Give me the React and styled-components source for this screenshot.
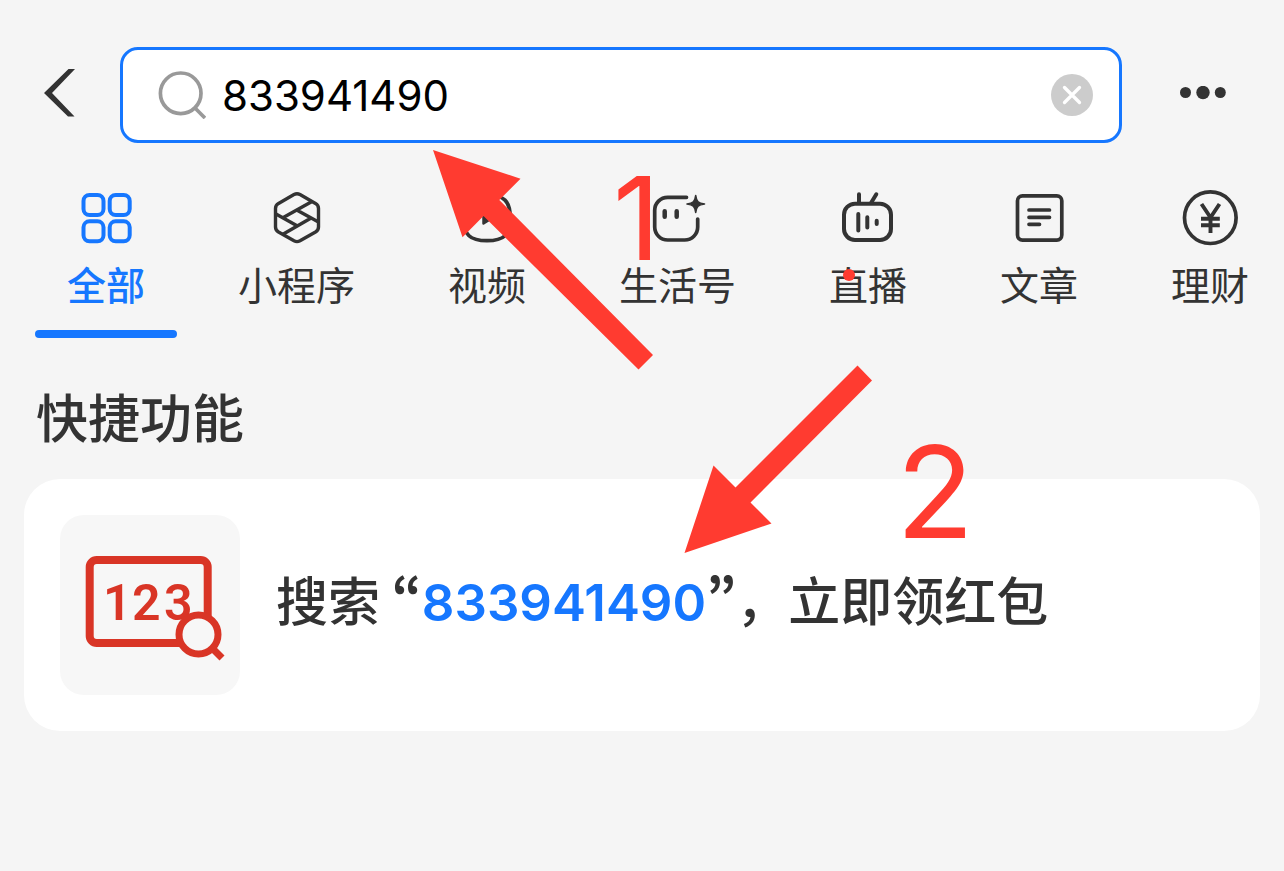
import React from "react";
import styled, { createGlobalStyle } from "styled-components";

const BLUE = "#1677ff";
const INK = "#333333";
const MARK = "#ff3b30";

const GlobalStyle = createGlobalStyle`
  *, *::before, *::after { box-sizing: border-box; }
  body {
    margin: 0;
    background: #f5f5f5;
    color: ${INK};
    font-family: Inter, "Noto Sans CJK SC", sans-serif;
  }
  button { border: 0; padding: 0; background: none; color: inherit; font: inherit; cursor: pointer; }
`;

const Page = styled.div`
  position: relative;
  min-height: 100vh;
  padding-top: 47px;
  overflow-x: hidden;
`;

const Header = styled.header`
  display: grid;
  grid-template-columns: 120px 1fr 162px;
  align-items: start;
`;

const HeaderButton = styled.button`
  display: flex;
  align-items: center;
  justify-content: center;
  height: 92px;
`;

const SearchField = styled.label`
  display: flex;
  align-items: center;
  gap: 16px;
  height: 96px;
  padding: 0 26px 0 35px;
  border: 3px solid ${BLUE};
  border-radius: 18px;
  background: #fff;
`;

const SearchInput = styled.input`
  flex: 1;
  min-width: 0;
  height: 60px;
  padding: 0;
  border: 0;
  outline: 0;
  background: transparent;
  color: #000;
  font-family: inherit;
  font-size: 42px;
`;

const ClearButton = styled.button`
  display: flex;
  align-items: center;
  justify-content: center;
  width: 42px;
  height: 42px;
  border-radius: 50%;
  background: #cccccc;
`;

const Tabs = styled.nav`
  display: flex;
  gap: 29px;
  margin-top: 45px;
  padding-left: 35px;
  overflow: hidden;
`;

const TabItem = styled.div`
  display: flex;
  flex: none;
  flex-direction: column;
`;

const Tab = styled.button`
  display: flex;
  flex-direction: column;
  align-items: center;
  gap: 10px;
  padding: 0 32px 16px;
  color: ${(p) => (p.$active ? BLUE : INK)};
`;

const TabLabel = styled.span`
  font-size: 39px;
  line-height: 56px;
  font-weight: ${(p) => (p.$active ? 500 : 400)};
  white-space: nowrap;
`;

const Indicator = styled.span`
  height: 8px;
  border-radius: 4px;
  background: ${(p) => (p.$active ? BLUE : "transparent")};
`;

const Section = styled.section`
  padding: 44px 24px 0;
`;

const SectionTitle = styled.h2`
  margin: 0 0 21px;
  padding-left: 12px;
  font-size: 52px;
  line-height: 76px;
  font-weight: 500;
`;

const Card = styled.a`
  display: flex;
  align-items: center;
  gap: 36px;
  padding: 36px;
  border-radius: 36px;
  background: #fff;
  color: inherit;
  text-decoration: none;
`;

const Thumb = styled.span`
  flex: none;
  width: 180px;
  height: 180px;
  border-radius: 24px;
  background: #f7f7f7;
`;

const CardText = styled.span`
  padding-bottom: 8px;
  font-size: 52px;
  line-height: 76px;
  font-weight: 500;
`;

const Quote = styled.span`
  font-family: "Noto Sans CJK SC", sans-serif;
  font-feature-settings: "pwid";
  font-weight: 700;
`;

const Keyword = styled.span`
  color: ${BLUE};
  font-size: 51px;
  font-weight: 600;
`;

const Arrow = styled.svg`
  position: absolute;
  left: ${(p) => p.$x}px;
  top: ${(p) => p.$y}px;
  fill: ${MARK};
  pointer-events: none;
`;

const StepNumber = styled.span`
  position: absolute;
  left: ${(p) => p.$x}px;
  top: ${(p) => p.$y}px;
  color: ${MARK};
  font-size: ${(p) => p.$size}px;
  line-height: ${(p) => p.$height}px;
  font-weight: 400;
  pointer-events: none;
`;

const Dot = styled.span`
  position: absolute;
  left: 843px;
  top: 269px;
  width: 12px;
  height: 12px;
  border-radius: 50%;
  background: ${MARK};
`;

const TabIcon = ({ children, width = 4, cap = "round" }) => (
  <svg width="60" height="60" viewBox="0 0 60 60" fill="none" stroke="currentColor"
    strokeWidth={width} strokeLinecap={cap} strokeLinejoin="round" aria-hidden="true">
    {children}
  </svg>
);

const tabs = [
  {
    label: "全部",
    icon: (
      <TabIcon>
        <rect x="7.5" y="7" width="20" height="20" rx="6" />
        <rect x="33.7" y="7" width="20" height="20" rx="6" />
        <rect x="7.5" y="33.3" width="20" height="20" rx="6" />
        <rect x="33.7" y="33.3" width="20" height="20" rx="6" />
      </TabIcon>
    ),
  },
  {
    label: "小程序",
    icon: (
      <TabIcon width={3.4} cap="butt">
        <path d="M27 6.6Q30 5 33 6.6L48.5 15.4Q51.5 17.2 51.5 20.5V39Q51.5 42.2 48.5 44L33 52.8Q30 54.4 27 52.8L11.5 44Q8.5 42.2 8.5 39V20.5Q8.5 17.2 11.5 15.4Z" />
        <path d="M45 13.5L16.3 29.5M9 26L30 37.8M15.5 46.5L43.7 30.3M51 33.7L29.7 22" />
      </TabIcon>
    ),
  },
  {
    label: "视频",
    icon: (
      <TabIcon width={3.7}>
        <path d="M30 7C47 7 53.3 13 53.3 30S47 52.7 30 52.7S6.7 47 6.7 30S13 7 30 7Z" />
        <path d="M26.5 23.5V35.5L36 29.5Z" fill="currentColor" strokeWidth="2.5" />
      </TabIcon>
    ),
  },
  {
    label: "生活号",
    icon: (
      <TabIcon width={3.7}>
        <path d="M38.5 9.3H19.7A13 13 0 0 0 6.7 22.3V39A13 13 0 0 0 19.7 52H36.7A13 13 0 0 0 49.7 39V31" />
        <path d="M16.7 23.3V28.7M28.7 23.3V28.7" strokeWidth="4.5" />
        <path d="M47.7 7.5C48.5 13.5 50.2 15.2 56.5 16C50.2 16.8 48.5 18.5 47.7 24.5C46.9 18.5 45.2 16.8 39 16C45.2 15.2 46.9 13.5 47.7 7.5Z" fill="currentColor" strokeWidth="1.6" />
      </TabIcon>
    ),
  },
  {
    label: "直播",
    icon: (
      <TabIcon>
        <rect x="6" y="15.7" width="47" height="36.3" rx="11" />
        <path d="M21 6.3V14M38.3 6.3L33.3 14.5M20.3 26V42.5M29.3 29.3V39.5M38.7 32.7V36" />
      </TabIcon>
    ),
  },
  {
    label: "文章",
    icon: (
      <TabIcon width={3.7}>
        <rect x="8.5" y="7.8" width="44.3" height="44.3" rx="5" />
        <path d="M20 22H40.5M20 29.3H40.5M20 36.3H30.5" />
      </TabIcon>
    ),
  },
  {
    label: "理财",
    icon: (
      <TabIcon width={3.7} cap="butt">
        <circle cx="30.3" cy="29.7" r="25.8" />
        <path d="M21.5 16L30.5 29.5L39.5 16M30.5 29V45M21 30.7H39.8M21 37.3H39.8" strokeWidth="3.9" />
      </TabIcon>
    ),
  },
];

const CodeSearchIcon = () => (
  <svg width="180" height="180" viewBox="0 0 180 180" fill="none" stroke="#d93526" aria-hidden="true">
    <rect x="29.7" y="45" width="118" height="83" rx="7" strokeWidth="8" />
    <g fill="#d93526" stroke="none" fontFamily="Roboto, sans-serif" fontWeight="600" fontSize="50">
      <text x="43" y="105">1</text>
      <text x="72" y="105">2</text>
      <text x="104" y="105">3</text>
    </g>
    <path d="M150 131L162 143" strokeWidth="7" />
    <circle cx="138.5" cy="119.5" r="19.5" fill="#f7f7f7" strokeWidth="7" />
  </svg>
);

export default function App() {
  return (
    <Page>
      <GlobalStyle />
      <Header>
        <HeaderButton type="button" aria-label="返回">
          <svg width="32" height="50" viewBox="0 0 32 50" fill={INK} aria-hidden="true">
            <path d="M24.5 1H31L8 25L30.5 48.5H24L0 25Z" />
          </svg>
        </HeaderButton>
        <SearchField>
          <svg width="48" height="48" viewBox="0 0 48 48" fill="none" stroke="#999999" strokeWidth="3.7" aria-hidden="true">
            <circle cx="22.7" cy="22.3" r="20.3" />
            <path d="M37 37L47 47" />
          </svg>
          <SearchInput type="text" aria-label="搜索" defaultValue="833941490" />
          <ClearButton type="button" aria-label="清除">
            <svg width="20" height="20" viewBox="0 0 20 20" stroke="#fff" strokeWidth="3.3" strokeLinecap="round" aria-hidden="true">
              <path d="M2.5 2.5L17.5 17.5M17.5 2.5L2.5 17.5" />
            </svg>
          </ClearButton>
        </SearchField>
        <HeaderButton type="button" aria-label="更多">
          <svg width="46" height="14" viewBox="0 0 46 14" fill={INK} aria-hidden="true">
            <circle cx="5.5" cy="6.5" r="5.5" />
            <circle cx="23" cy="6.5" r="6.7" />
            <circle cx="40.3" cy="6.5" r="5.5" />
          </svg>
        </HeaderButton>
      </Header>

      <Tabs>
        {tabs.map((tab, i) => (
          <TabItem key={tab.label}>
            <Tab type="button" $active={i === 0}>
              {tab.icon}
              <TabLabel $active={i === 0}>{tab.label}</TabLabel>
            </Tab>
            <Indicator $active={i === 0} />
          </TabItem>
        ))}
      </Tabs>

      <Section>
        <SectionTitle>快捷功能</SectionTitle>
        <Card href="#">
          <Thumb>
            <CodeSearchIcon />
          </Thumb>
          <CardText>
            搜索<Quote> “</Quote><Keyword>833941490</Keyword><Quote>”</Quote>，立即领红包
          </CardText>
        </Card>
      </Section>

      <Arrow $x={433} $y={150} width="220" height="220" viewBox="0 0 220 220">
        <path d="M0 0L87.5 28.7L66.3 50L220 205L205.5 219.5L50.5 66L29.5 87.3Z" />
      </Arrow>
      <StepNumber $x={613} $y={176} $size={116} $height={84}>1</StepNumber>
      <Arrow $x={684} $y={365} width="188" height="188" viewBox="0 0 188 188">
        <path d="M0.5 188L29.5 100.5L51.5 122.5L173.5 0.5L188 15.5L66.5 137.5L87.5 158.5Z" />
      </Arrow>
      <StepNumber $x={896} $y={444} $size={128} $height={96}>2</StepNumber>
      <Dot />
    </Page>
  );
}
